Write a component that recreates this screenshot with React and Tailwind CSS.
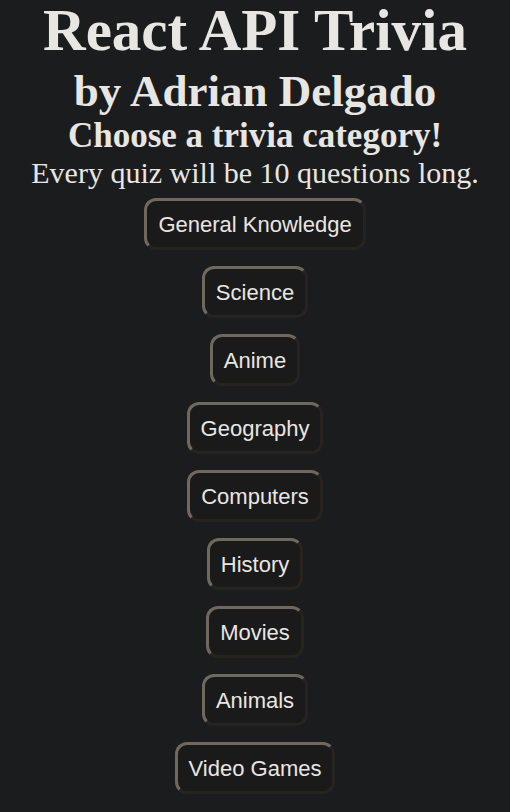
export default function App() {
  const cats = [
    "General Knowledge",
    "Science",
    "Anime",
    "Geography",
    "Computers",
    "History",
    "Movies",
    "Animals",
    "Video Games",
  ];
  return (
    <div className="min-h-[812px] w-full bg-[#1b1c1e] text-[#e8e6e3] flex flex-col items-center" style={{ fontFamily: '"Liberation Serif", serif' }}>
      <h1 className="font-bold text-[59px] leading-[61px] text-center whitespace-nowrap">React API Trivia</h1>
      <h2 className="font-bold text-[45px] leading-[60px] text-center whitespace-nowrap">by Adrian Delgado</h2>
      <h3 className="font-bold text-[35px] leading-[30px] text-center whitespace-nowrap">Choose a trivia category!</h3>
      <p className="text-[30px] leading-[30px] mt-[7px] text-center whitespace-nowrap">Every quiz will be 10 questions long.</p>
      <div className="flex flex-col items-center gap-4 mt-[10px]">
        {cats.map((c) => (
          <button
            key={c}
            className="h-[52px] px-[11px] flex items-center justify-center rounded-[12px] border-[3px] border-t-[#6f685d] border-l-[#6f685d] border-b-[#27241f] border-r-[#27241f] bg-[#1a1a1a] text-[22px] leading-[25px] text-[#e8e6e3] whitespace-nowrap"
            style={{ fontFamily: '"Liberation Sans", Arial, sans-serif' }}
          >
            {c}
          </button>
        ))}
      </div>
    </div>
  );
}
